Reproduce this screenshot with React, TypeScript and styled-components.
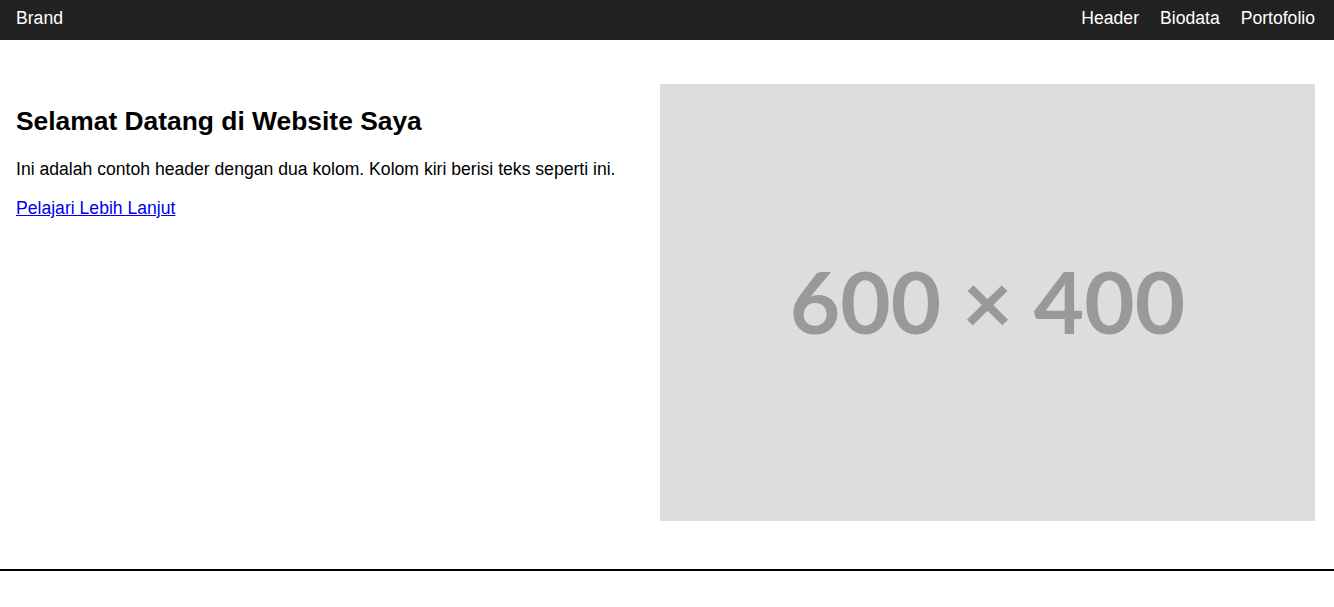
import React from "react";
import styled, { createGlobalStyle } from "styled-components";

const GlobalStyle = createGlobalStyle`
  html, body { margin: 0; padding: 0; background: #fff; }
  body { font-family: "Liberation Sans", Arial, sans-serif; color: #000; font-size: 17.6px; }
`;

const Nav = styled.nav`
  box-sizing: border-box;
  height: 40px;
  background: #222222;
  display: flex;
  align-items: flex-start;
  justify-content: space-between;
  padding: 8px 19px 0 16px;
  font-size: 17.6px;
  line-height: 20px;
  color: #fff;
`;

const Brand = styled.a`
  color: #fff;
  text-decoration: none;
`;

const Links = styled.div`
  display: flex;
  gap: 21px;
`;

const NavLink = styled.a`
  color: #fff;
  text-decoration: none;
`;

const Hero = styled.header`
  display: grid;
  grid-template-columns: 1fr 655px;
  gap: 20px;
  padding: 44px 19px 48px 16px;
  border-bottom: 2px solid #000;
`;

const TextCol = styled.div`
  padding-top: 22px;
`;

const Title = styled.h1`
  margin: 0 0 22px;
  font-size: 26.4px;
  font-weight: 700;
`;

const Lead = styled.p`
  margin: 0 0 18px;
  font-size: 17.6px;
`;

const More = styled.a`
  font-size: 17.6px;
  color: #0000ee;
  text-decoration: underline;
`;

const Placeholder = styled.div`
  box-sizing: border-box;
  aspect-ratio: 3 / 2;
  background: #dddddd;
  display: flex;
  align-items: center;
  justify-content: center;
  padding-bottom: 4px;
  font-family: Lato, "Liberation Sans", sans-serif;
  font-weight: 700;
  font-size: 87px;
  color: #999999;
`;

export default function App() {
  return (
    <>
      <GlobalStyle />
      <Nav>
        <Brand href="#">Brand</Brand>
        <Links>
          <NavLink href="#">Header</NavLink>
          <NavLink href="#">Biodata</NavLink>
          <NavLink href="#">Portofolio</NavLink>
        </Links>
      </Nav>
      <Hero>
        <TextCol>
          <Title>Selamat Datang di Website Saya</Title>
          <Lead>Ini adalah contoh header dengan dua kolom. Kolom kiri berisi teks seperti ini.</Lead>
          <More href="#">Pelajari Lebih Lanjut</More>
        </TextCol>
        <Placeholder>600 × 400</Placeholder>
      </Hero>
    </>
  );
}
